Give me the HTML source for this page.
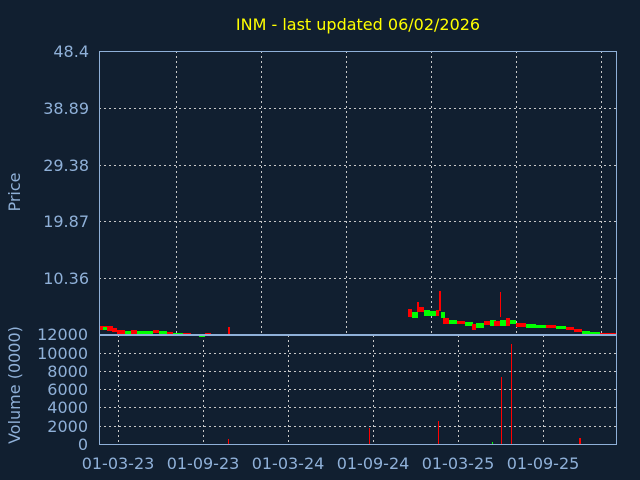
<!DOCTYPE html>
<html><head><meta charset="utf-8"><style>
html,body{margin:0;padding:0;background:#111f30;}
svg{display:block;}
text{font-family:"DejaVu Sans","Liberation Sans",sans-serif;fill:#8fb0d8;}
</style></head><body>
<svg width="640" height="480" xmlns="http://www.w3.org/2000/svg">
<rect width="640" height="480" fill="#111f30"/>
<text x="358" y="30" text-anchor="middle" font-size="16" style="fill:#ffff00">INM - last updated 06/02/2026</text>
<!-- price grid -->
<g stroke="#c8c8c8" stroke-dasharray="2,3" stroke-width="1">
<line x1="99" y1="108.5" x2="617" y2="108.5"/><line x1="99" y1="165.5" x2="617" y2="165.5"/>
<line x1="99" y1="221.5" x2="617" y2="221.5"/><line x1="99" y1="278.5" x2="617" y2="278.5"/>
<line x1="176.5" y1="51" x2="176.5" y2="335"/><line x1="261.5" y1="51" x2="261.5" y2="335"/>
<line x1="346.5" y1="51" x2="346.5" y2="335"/><line x1="431.5" y1="51" x2="431.5" y2="335"/>
<line x1="516.5" y1="51" x2="516.5" y2="335"/><line x1="601.5" y1="51" x2="601.5" y2="335"/>
<line x1="99" y1="353.5" x2="617" y2="353.5"/><line x1="99" y1="371.5" x2="617" y2="371.5"/>
<line x1="99" y1="389.5" x2="617" y2="389.5"/><line x1="99" y1="407.5" x2="617" y2="407.5"/>
<line x1="99" y1="426.5" x2="617" y2="426.5"/>
<line x1="118.5" y1="335" x2="118.5" y2="445"/><line x1="203.5" y1="335" x2="203.5" y2="445"/>
<line x1="288.5" y1="335" x2="288.5" y2="445"/><line x1="373.5" y1="335" x2="373.5" y2="445"/>
<line x1="458.5" y1="335" x2="458.5" y2="445"/><line x1="543.5" y1="335" x2="543.5" y2="445"/>
</g>
<!-- price candles -->
<g>
<rect x="99" y="326" width="8" height="4" fill="#ff0000"/><rect x="103" y="327" width="4" height="3" fill="#00ff00"/>
<rect x="107" y="326" width="6" height="5" fill="#ff0000"/><rect x="112" y="328" width="5" height="4" fill="#ff0000"/>
<rect x="117" y="330" width="8" height="4" fill="#ff0000"/><rect x="125" y="331" width="6" height="3" fill="#00ff00"/>
<rect x="131" y="330" width="6" height="4" fill="#ff0000"/><rect x="137" y="331" width="8" height="3" fill="#00ff00"/>
<rect x="145" y="331" width="8" height="3" fill="#00ff00"/><rect x="153" y="330" width="6" height="3" fill="#ff0000"/>
<rect x="159" y="331" width="8" height="3" fill="#00ff00"/><rect x="167" y="332" width="6" height="3" fill="#ff0000"/>
<rect x="173" y="333" width="10" height="3" fill="#00ff00"/><rect x="183" y="333" width="8" height="2" fill="#ff0000"/>
<rect x="191" y="334" width="8" height="2" fill="#ff0000"/><rect x="199" y="334" width="6" height="3" fill="#00ff00"/>
<rect x="205" y="333" width="6" height="2" fill="#ff0000"/><rect x="228" y="327" width="2" height="8" fill="#ff0000"/>
<rect x="408" y="309" width="4" height="8" fill="#ff0000"/><rect x="412" y="312" width="6" height="6" fill="#00ff00"/>
<rect x="417" y="302" width="2" height="10" fill="#ff0000"/><rect x="418" y="307" width="6" height="5" fill="#ff0000"/>
<rect x="424" y="310" width="6" height="6" fill="#00ff00"/><rect x="430" y="311" width="6" height="5" fill="#00ff00"/>
<rect x="436" y="310" width="3" height="6" fill="#ff0000"/><rect x="439" y="291" width="2" height="20" fill="#ff0000"/>
<rect x="441" y="312" width="4" height="6" fill="#00ff00"/><rect x="443" y="318" width="6" height="6" fill="#ff0000"/>
<rect x="449" y="320" width="8" height="4" fill="#00ff00"/><rect x="457" y="321" width="8" height="3" fill="#ff0000"/>
<rect x="465" y="322" width="8" height="4" fill="#00ff00"/><rect x="472" y="324" width="4" height="6" fill="#ff0000"/>
<rect x="476" y="323" width="8" height="5" fill="#00ff00"/><rect x="484" y="321" width="6" height="4" fill="#ff0000"/>
<rect x="490" y="320" width="6" height="6" fill="#00ff00"/><rect x="494" y="321" width="6" height="5" fill="#ff0000"/>
<rect x="500" y="292" width="1" height="25" fill="#ff0000"/><rect x="500" y="320" width="6" height="6" fill="#00ff00"/>
<rect x="506" y="318" width="4" height="8" fill="#ff0000"/><rect x="510" y="320" width="6" height="4" fill="#00ff00"/>
<rect x="516" y="323" width="10" height="4" fill="#ff0000"/><rect x="526" y="324" width="10" height="4" fill="#00ff00"/>
<rect x="536" y="325" width="10" height="3" fill="#00ff00"/><rect x="546" y="325" width="10" height="3" fill="#ff0000"/>
<rect x="556" y="326" width="10" height="3" fill="#00ff00"/><rect x="566" y="327" width="8" height="3" fill="#ff0000"/>
<rect x="574" y="329" width="8" height="3" fill="#ff0000"/><rect x="582" y="331" width="8" height="3" fill="#00ff00"/>
<rect x="590" y="332" width="10" height="3" fill="#00ff00"/><rect x="600" y="333" width="8" height="2" fill="#ff0000"/>
<rect x="608" y="333" width="9" height="2" fill="#ff0000"/>
</g>
<!-- volume bars -->
<g>
<rect x="228" y="439" width="1" height="6" fill="#ff0000"/>
<rect x="369" y="428" width="1" height="17" fill="#ff0000"/>
<rect x="438" y="421" width="1" height="24" fill="#ff0000"/>
<rect x="501" y="377" width="1" height="68" fill="#ff0000"/>
<rect x="511" y="344" width="1" height="101" fill="#ff0000"/>
<rect x="492" y="442" width="1" height="3" fill="#00ff00"/>
<rect x="579" y="438" width="2" height="7" fill="#ff0000"/>
</g>
<!-- axes -->
<g stroke="#8fb0d8" stroke-width="1" fill="none">
<rect x="99.5" y="51.5" width="517" height="283"/>
<rect x="99.5" y="335.5" width="517" height="109"/>
</g>
<g font-size="16" text-anchor="end">
<text x="89" y="57">48.4</text><text x="89" y="114">38.89</text>
<text x="89" y="171">29.38</text><text x="89" y="227">19.87</text>
<text x="89" y="284">10.36</text>
<text x="88" y="340">12000</text><text x="88" y="359">10000</text>
<text x="88" y="377">8000</text><text x="88" y="395">6000</text>
<text x="88" y="413">4000</text><text x="88" y="432">2000</text>
<text x="88" y="450">0</text>
</g>
<g font-size="16" text-anchor="middle">
<text x="118" y="469">01-03-23</text><text x="203" y="469">01-09-23</text>
<text x="288" y="469">01-03-24</text><text x="373" y="469">01-09-24</text>
<text x="458" y="469">01-03-25</text><text x="543" y="469">01-09-25</text>
</g>
<text x="20" y="192" font-size="16" text-anchor="middle" transform="rotate(-90 20 192)">Price</text>
<text x="20" y="385" font-size="16" text-anchor="middle" transform="rotate(-90 20 385)">Volume (0000)</text>
</svg>
</body></html>
